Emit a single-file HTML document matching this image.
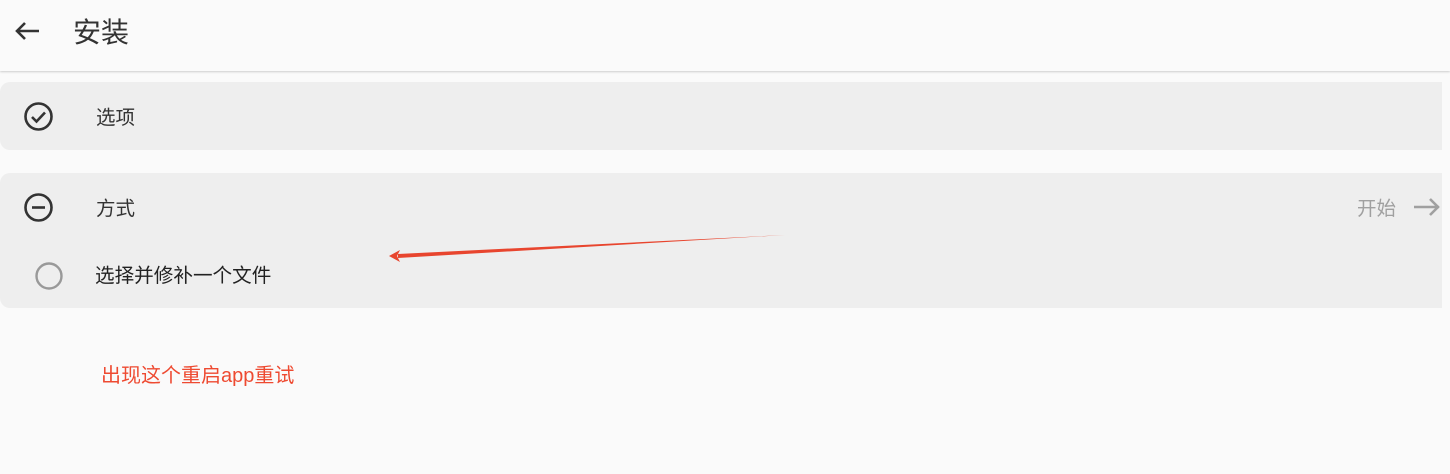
<!DOCTYPE html>
<html><head><meta charset="utf-8"><style>
html,body{margin:0;padding:0;width:1450px;height:474px;background:#fafafa;overflow:hidden;font-family:"Liberation Sans","Noto Sans CJK SC",sans-serif;position:relative}
.hdr{position:absolute;left:0;top:0;width:1450px;height:71px;background:#fafafa;box-shadow:0 1px 2px rgba(0,0,0,0.18)}
.t{position:absolute;white-space:nowrap;line-height:1}
.card{position:absolute;left:0;width:1442px;background:#eeeeee;border-radius:10px 0 0 10px}
</style></head><body>
<div class="hdr"></div>
<svg class="t" style="left:12px;top:19px" width="30" height="24" viewBox="0 0 30 24"><path d="M27 12H5M13 4L5 12l8 8" fill="none" stroke="#333" stroke-width="2.6"/></svg>
<div class="t" style="left:73px;top:19px;font-size:28px;color:#333">安装</div>
<div class="card" style="top:82px;height:68px"></div>
<svg class="t" style="left:23px;top:101px" width="31" height="31" viewBox="0 0 31 31"><circle cx="15.5" cy="15.5" r="13" fill="none" stroke="#333" stroke-width="2.6"/><path d="M9 16l4.5 4.5L22 11.5" fill="none" stroke="#333" stroke-width="2.6"/></svg>
<div class="t" style="left:96px;top:109px;font-size:19.5px;color:#333">选项</div>
<div class="card" style="top:173px;height:135px"></div>
<svg class="t" style="left:23px;top:192px" width="31" height="31" viewBox="0 0 31 31"><circle cx="15.5" cy="15.5" r="13" fill="none" stroke="#333" stroke-width="2.6"/><path d="M9 15.5h13" stroke="#333" stroke-width="2.6"/></svg>
<div class="t" style="left:96px;top:200px;font-size:19.5px;color:#333">方式</div>
<div class="t" style="left:1357px;top:200px;font-size:19.5px;color:#a0a0a0">开始</div>
<svg class="t" style="left:1413px;top:196px" width="29" height="22" viewBox="0 0 29 22"><path d="M1 11h25M17 3l8 8-8 8" fill="none" stroke="#a0a0a0" stroke-width="2.6"/></svg>
<svg class="t" style="left:34px;top:261px" width="30" height="30" viewBox="0 0 30 30"><circle cx="15" cy="15" r="12.5" fill="none" stroke="#999" stroke-width="2.4"/></svg>
<div class="t" style="left:95px;top:267px;font-size:19.6px;color:#222">选择并修补一个文件</div>
<svg class="t" style="left:0;top:0" width="1450" height="474"><path d="M398 254 L785 235 L398 258 Z" fill="#e8452e"/><path d="M389 256 L400 250 L397 256 L400 262 Z" fill="#e8452e"/></svg>
<div class="t" style="left:101px;top:366px;font-size:20px;color:#ee4a31">出现这个重启app重试</div>
</body></html>
